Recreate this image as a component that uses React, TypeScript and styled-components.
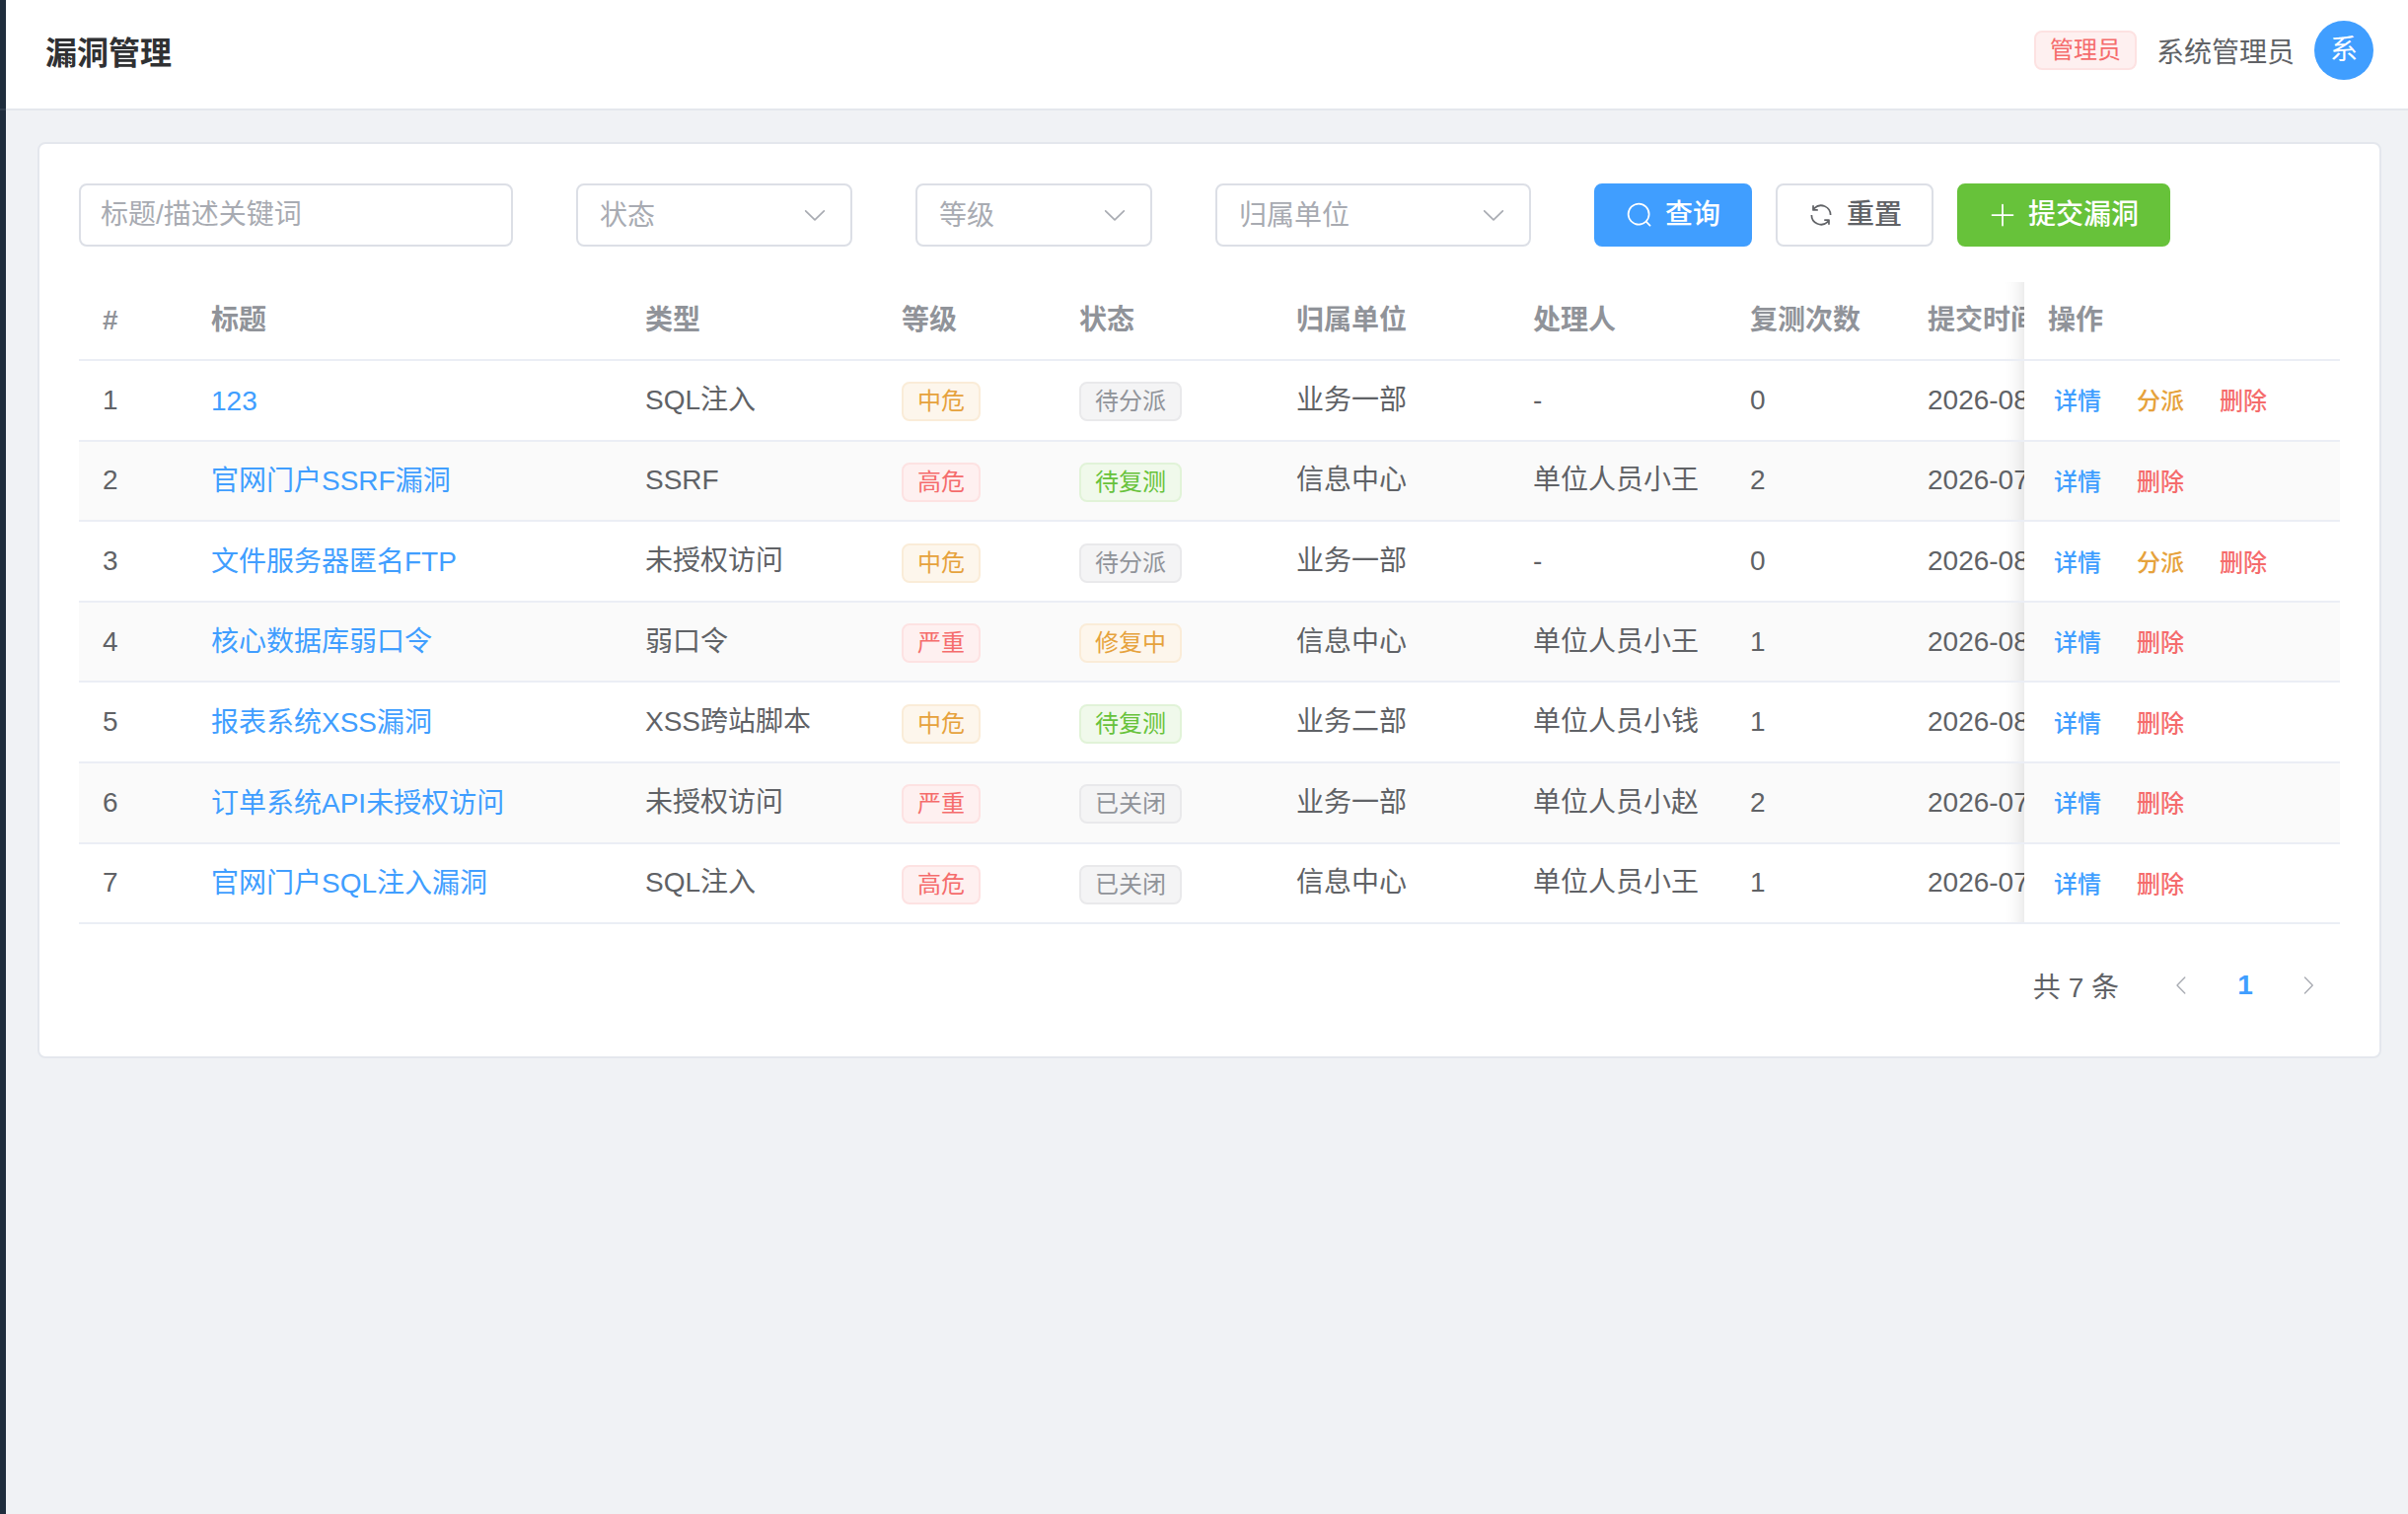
import React, { useId } from "react";
import styled, { createGlobalStyle, css } from "styled-components";

const color = {
  primary: "#409eff",
  success: "#67c23a",
  warning: "#e6a23c",
  danger: "#f56c6c",
  info: "#909399",
  heading: "#303133",
  text: "#606266",
  placeholder: "#a8abb2",
  border: "#dcdfe6",
  borderLight: "#e4e7ed",
  borderLighter: "#ebeef5",
  stripe: "#fafafa",
  page: "#f0f2f5",
  sidebar: "#1f2d3d",
};

type Tone = "success" | "warning" | "danger" | "info";

const tagTone: Record<Tone, { bg: string; line: string }> = {
  success: { bg: "#f0f9eb", line: "#e1f3d8" },
  warning: { bg: "#fdf6ec", line: "#faecd8" },
  danger: { bg: "#fef0f0", line: "#fde2e2" },
  info: { bg: "#f4f4f5", line: "#e9e9eb" },
};

const GlobalStyle = createGlobalStyle`
  *, *::before, *::after { box-sizing: border-box; }
  body {
    margin: 0;
    background: ${color.page};
    color: ${color.text};
    font-family: "Liberation Sans", "Noto Sans CJK SC", sans-serif;
    font-size: 28px;
  }
  button, input, select { font: inherit; margin: 0; }
`;

const Layout = styled.div`
  display: flex;
  min-height: 100vh;
`;

const Sidebar = styled.aside`
  flex: 0 0 6px;
  background: ${color.sidebar};
`;

const SidebarHead = styled.div`
  height: 112px;
  border-bottom: 2px solid rgba(255, 255, 255, 0.08);
`;

const Page = styled.div`
  flex: 1;
  min-width: 0;
`;

const Header = styled.header`
  display: flex;
  align-items: center;
  justify-content: space-between;
  height: 112px;
  padding: 0 35px 8px 40px;
  background: #fff;
  border-bottom: 2px solid ${color.borderLight};
`;

const Title = styled.h1`
  margin: 0;
  font-size: 32px;
  font-weight: 600;
  color: ${color.heading};
`;

const User = styled.div`
  display: flex;
  align-items: center;
  gap: 20px;
`;

const Avatar = styled.span`
  width: 60px;
  height: 60px;
  border-radius: 50%;
  background: ${color.primary};
  color: #fff;
  line-height: 60px;
  text-align: center;
`;

const Tag = styled.span<{ $tone: Tone }>`
  display: inline-flex;
  align-items: center;
  justify-content: center;
  vertical-align: middle;
  height: 40px;
  padding: 0 14px;
  border: 2px solid ${(p) => tagTone[p.$tone].line};
  border-radius: 8px;
  background: ${(p) => tagTone[p.$tone].bg};
  color: ${(p) => color[p.$tone]};
  font-size: 24px;
  line-height: 1;
  white-space: nowrap;
`;

const Content = styled.main`
  padding: 32px 27px 32px 32px;
`;

const Card = styled.section`
  padding: 40px;
  border: 2px solid ${color.borderLight};
  border-radius: 8px;
  background: #fff;
`;

const Filters = styled.form`
  display: flex;
  flex-wrap: wrap;
  gap: 36px 64px;
  margin-bottom: 36px;
`;

const field = css`
  width: 100%;
  height: 64px;
  border: 2px solid ${color.border};
  border-radius: 8px;
  background: #fff;
  outline: none;
  &:focus {
    border-color: ${color.primary};
  }
`;

const KeywordInput = styled.input`
  ${field}
  width: 440px;
  padding: 0 20px;
  color: ${color.text};
  &::placeholder {
    color: ${color.placeholder};
    opacity: 1;
  }
`;

const SelectBox = styled.div<{ $width: number }>`
  position: relative;
  width: ${(p) => p.$width}px;
  color: ${color.placeholder};
  svg {
    position: absolute;
    top: 18px;
    right: 24px;
    pointer-events: none;
  }
`;

const SelectField = styled.select`
  ${field}
  padding: 0 60px 0 22px;
  appearance: none;
  color: inherit;
`;

const Actions = styled.div`
  display: flex;
  gap: 24px;
`;

const fill = {
  primary: { bg: color.primary, line: color.primary, text: "#fff" },
  success: { bg: color.success, line: color.success, text: "#fff" },
  plain: { bg: "#fff", line: color.border, text: color.text },
};

const Button = styled.button<{ $kind: keyof typeof fill }>`
  display: inline-flex;
  align-items: center;
  justify-content: center;
  gap: 12px;
  height: 64px;
  padding: 0 30px;
  border: 2px solid ${(p) => fill[p.$kind].line};
  border-radius: 8px;
  background: ${(p) => fill[p.$kind].bg};
  color: ${(p) => fill[p.$kind].text};
  font-weight: 500;
  line-height: 1;
  white-space: nowrap;
  cursor: pointer;
`;

const TableScroll = styled.div`
  overflow-x: auto;
  scrollbar-width: none;
`;

const Table = styled.table`
  width: 100%;
  min-width: 2490px;
  table-layout: fixed;
  border-collapse: separate;
  border-spacing: 0;
  line-height: 46px;
`;

const cell = css`
  padding: 16px 24px;
  border-bottom: 2px solid ${color.borderLighter};
  background: #fff;
  text-align: left;
  vertical-align: middle;
  white-space: nowrap;
`;

const pinned = css`
  position: sticky;
  right: 0;
  &::before {
    content: "";
    position: absolute;
    top: 0;
    bottom: 0;
    left: -20px;
    width: 20px;
    box-shadow: inset -20px 0 20px -20px rgba(0, 0, 0, 0.15);
    pointer-events: none;
  }
`;

const HeadCell = styled.th<{ $pinned?: boolean }>`
  ${cell}
  color: ${color.info};
  font-weight: 600;
  ${(p) => p.$pinned && pinned}
`;

const Cell = styled.td<{ $pinned?: boolean }>`
  ${cell}
  ${(p) => p.$pinned && pinned}
`;

const Row = styled.tr`
  &:nth-child(even) ${Cell} {
    background: ${color.stripe};
  }
`;

const TitleLink = styled.a`
  display: inline-flex;
  align-items: center;
  vertical-align: middle;
  color: ${color.primary};
  text-decoration: none;
`;

const LinkButton = styled.button<{ $tone: "primary" | "warning" | "danger" }>`
  display: inline-flex;
  align-items: center;
  vertical-align: middle;
  padding: 4px;
  border: 2px solid transparent;
  background: transparent;
  color: ${(p) => color[p.$tone]};
  font-size: 24px;
  font-weight: 500;
  line-height: 1;
  cursor: pointer;
  & + & {
    margin-left: 24px;
  }
`;

const Pagination = styled.nav`
  display: flex;
  align-items: center;
  justify-content: flex-end;
  margin-top: 30px;
`;

const Total = styled.span`
  margin-right: 32px;
`;

const PageButton = styled.button<{ $active?: boolean }>`
  display: flex;
  align-items: center;
  justify-content: center;
  min-width: 64px;
  height: 64px;
  padding: 0 8px;
  border: 0;
  background: #fff;
  color: ${(p) => (p.$active ? color.primary : color.placeholder)};
  font-weight: ${(p) => (p.$active ? 700 : 400)};
  line-height: 1;
`;

const paths = {
  search:
    "m795.904 750.72 124.992 124.928a32 32 0 0 1-45.248 45.248L750.656 795.904a416 416 0 1 1 45.248-45.248zM480 832a352 352 0 1 0 0-704 352 352 0 0 0 0 704",
  refresh:
    "M771.776 794.88A384 384 0 0 1 128 512h64a320 320 0 0 0 555.712 216.448H654.72a32 32 0 1 1 0-64h149.056a32 32 0 0 1 32 32v148.928a32 32 0 1 1-64 0v-50.56zM276.288 295.616h92.992a32 32 0 0 1 0 64H220.16a32 32 0 0 1-32-32V178.56a32 32 0 0 1 64 0v50.56A384 384 0 0 1 896.128 512h-64a320 320 0 0 0-555.776-216.384z",
  plus: "M480 480V128a32 32 0 0 1 64 0v352h352a32 32 0 1 1 0 64H544v352a32 32 0 1 1-64 0V544H128a32 32 0 0 1 0-64z",
  down: "M831.872 340.864 512 652.672 192.128 340.864a30.592 30.592 0 0 0-42.752 0 29.12 29.12 0 0 0 0 41.6L489.664 714.24a32 32 0 0 0 44.672 0l340.288-331.712a29.12 29.12 0 0 0 0-41.728 30.592 30.592 0 0 0-42.752 0z",
  left: "M609.408 149.376 277.76 489.6a32 32 0 0 0 0 44.672l331.648 340.352a29.12 29.12 0 0 0 41.728 0 30.592 30.592 0 0 0 0-42.752L339.264 511.936l311.872-319.872a30.592 30.592 0 0 0 0-42.688 29.12 29.12 0 0 0-41.728 0z",
  right:
    "M340.864 149.312a30.592 30.592 0 0 0 0 42.752L652.736 512 340.864 831.872a30.592 30.592 0 0 0 0 42.752 29.12 29.12 0 0 0 41.728 0L714.24 534.336a32 32 0 0 0 0-44.672L382.592 149.376a29.12 29.12 0 0 0-41.728 0z",
};

function Icon({ name, size = 28 }: { name: keyof typeof paths; size?: number }) {
  return (
    <svg viewBox="0 0 1024 1024" width={size} height={size} fill="currentColor" aria-hidden="true">
      <path d={paths[name]} />
    </svg>
  );
}

function FilterSelect({ label, width }: { label: string; width: number }) {
  const id = useId();
  return (
    <SelectBox $width={width}>
      <SelectField id={id} aria-label={label} defaultValue="">
        <option value="">{label}</option>
      </SelectField>
      <Icon name="down" />
    </SelectBox>
  );
}

const columns = [
  { name: "#", width: 110 },
  { name: "标题", width: 440 },
  { name: "类型", width: 260 },
  { name: "等级", width: 180 },
  { name: "状态", width: 220 },
  { name: "归属单位", width: 240 },
  { name: "处理人", width: 220 },
  { name: "复测次数", width: 180 },
  { name: "提交时间", width: 320 },
  { name: "操作", width: 320 },
];

const levelTone: Record<string, Tone> = { 中危: "warning", 高危: "danger", 严重: "danger" };
const statusTone: Record<string, Tone> = {
  待分派: "info",
  待复测: "success",
  修复中: "warning",
  已关闭: "info",
};

const rows = [
  { title: "123", type: "SQL注入", level: "中危", status: "待分派", unit: "业务一部", owner: "-", retests: 0, date: "2026-08" },
  { title: "官网门户SSRF漏洞", type: "SSRF", level: "高危", status: "待复测", unit: "信息中心", owner: "单位人员小王", retests: 2, date: "2026-07" },
  { title: "文件服务器匿名FTP", type: "未授权访问", level: "中危", status: "待分派", unit: "业务一部", owner: "-", retests: 0, date: "2026-08" },
  { title: "核心数据库弱口令", type: "弱口令", level: "严重", status: "修复中", unit: "信息中心", owner: "单位人员小王", retests: 1, date: "2026-08" },
  { title: "报表系统XSS漏洞", type: "XSS跨站脚本", level: "中危", status: "待复测", unit: "业务二部", owner: "单位人员小钱", retests: 1, date: "2026-08" },
  { title: "订单系统API未授权访问", type: "未授权访问", level: "严重", status: "已关闭", unit: "业务一部", owner: "单位人员小赵", retests: 2, date: "2026-07" },
  { title: "官网门户SQL注入漏洞", type: "SQL注入", level: "高危", status: "已关闭", unit: "信息中心", owner: "单位人员小王", retests: 1, date: "2026-07" },
];

export default function App() {
  return (
    <>
      <GlobalStyle />
      <Layout>
        <Sidebar>
          <SidebarHead />
        </Sidebar>
        <Page>
          <Header>
            <Title>漏洞管理</Title>
            <User>
              <Tag $tone="danger">管理员</Tag>
              <span>系统管理员</span>
              <Avatar>系</Avatar>
            </User>
          </Header>
          <Content>
            <Card>
              <Filters onSubmit={(e) => e.preventDefault()}>
                <KeywordInput type="text" aria-label="标题/描述关键词" placeholder="标题/描述关键词" />
                <FilterSelect label="状态" width={280} />
                <FilterSelect label="等级" width={240} />
                <FilterSelect label="归属单位" width={320} />
                <Actions>
                  <Button type="submit" $kind="primary">
                    <Icon name="search" />
                    查询
                  </Button>
                  <Button type="reset" $kind="plain">
                    <Icon name="refresh" />
                    重置
                  </Button>
                  <Button type="button" $kind="success">
                    <Icon name="plus" />
                    提交漏洞
                  </Button>
                </Actions>
              </Filters>

              <TableScroll>
                <Table>
                  <colgroup>
                    {columns.map((c) => (
                      <col key={c.name} width={c.width} />
                    ))}
                  </colgroup>
                  <thead>
                    <tr>
                      {columns.map((c, i) => (
                        <HeadCell key={c.name} scope="col" $pinned={i === columns.length - 1}>
                          {c.name}
                        </HeadCell>
                      ))}
                    </tr>
                  </thead>
                  <tbody>
                    {rows.map((r, i) => (
                      <Row key={r.title}>
                        <Cell>{i + 1}</Cell>
                        <Cell>
                          <TitleLink href="#">{r.title}</TitleLink>
                        </Cell>
                        <Cell>{r.type}</Cell>
                        <Cell>
                          <Tag $tone={levelTone[r.level]}>{r.level}</Tag>
                        </Cell>
                        <Cell>
                          <Tag $tone={statusTone[r.status]}>{r.status}</Tag>
                        </Cell>
                        <Cell>{r.unit}</Cell>
                        <Cell>{r.owner}</Cell>
                        <Cell>{r.retests}</Cell>
                        <Cell>{r.date}</Cell>
                        <Cell $pinned>
                          <LinkButton type="button" $tone="primary">详情</LinkButton>
                          {r.status === "待分派" && (
                            <LinkButton type="button" $tone="warning">分派</LinkButton>
                          )}
                          <LinkButton type="button" $tone="danger">删除</LinkButton>
                        </Cell>
                      </Row>
                    ))}
                  </tbody>
                </Table>
              </TableScroll>

              <Pagination aria-label="分页">
                <Total>共 {rows.length} 条</Total>
                <PageButton type="button" aria-label="上一页" disabled>
                  <Icon name="left" size={24} />
                </PageButton>
                <PageButton type="button" $active aria-current="page">
                  1
                </PageButton>
                <PageButton type="button" aria-label="下一页" disabled>
                  <Icon name="right" size={24} />
                </PageButton>
              </Pagination>
            </Card>
          </Content>
        </Page>
      </Layout>
    </>
  );
}
